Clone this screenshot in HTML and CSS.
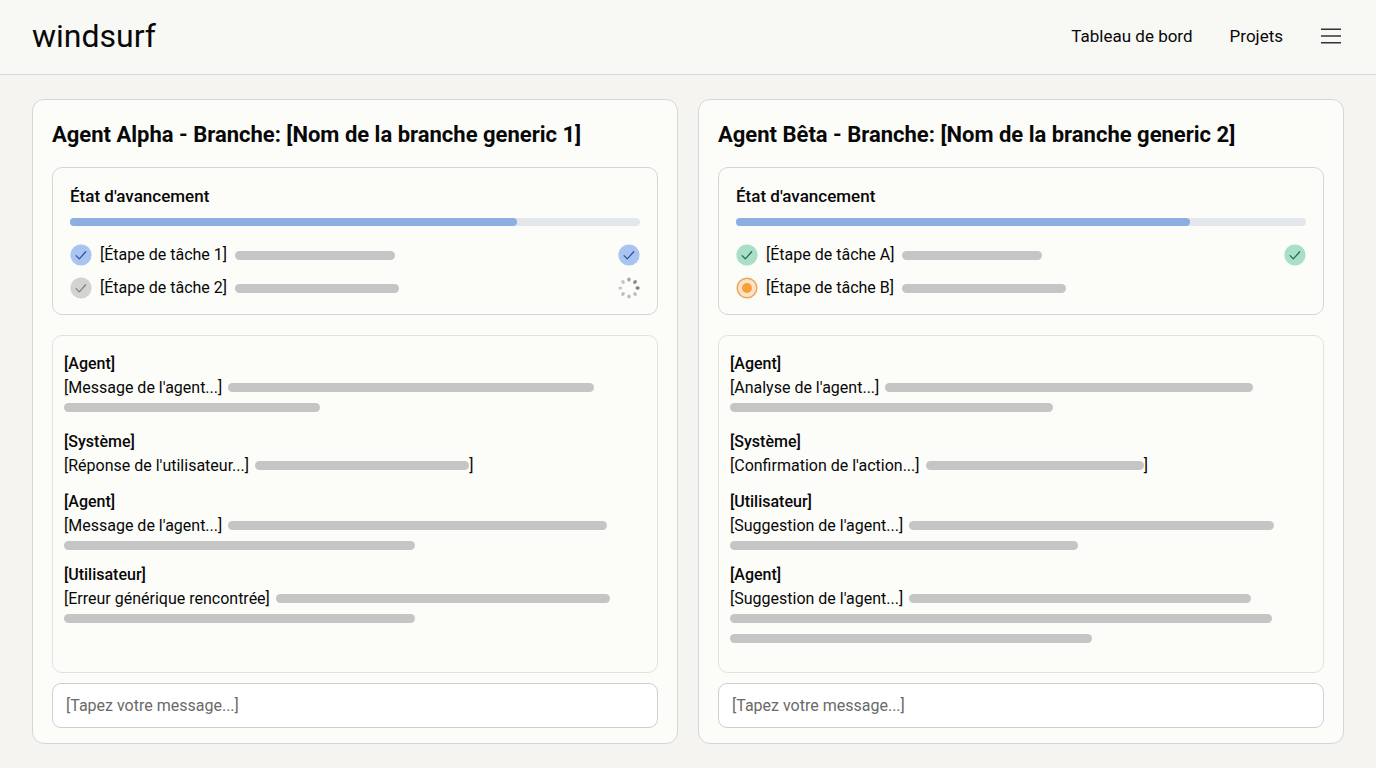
FILE: index.html
```html
<!DOCTYPE html>
<html lang="fr">
<head>
    <meta charset="UTF-8">
    <meta name="viewport" content="width=device-width, initial-scale=1.0">
    <title>windsurf</title>
    <link rel="stylesheet" href="styles.css">
</head>
<body>
    <!-- shared icons -->
    <svg class="sprite" aria-hidden="true">
        <symbol id="check" viewBox="0 0 22 22">
            <circle cx="11" cy="11" r="10.6" fill="var(--disc)"/>
            <path d="M6.1 11.6l3.2 3.3 6.4-7.1" fill="none" stroke="var(--mark)" stroke-width="1.3" stroke-linecap="round" stroke-linejoin="round"/>
        </symbol>
    </svg>

    <header class="header">
        <a class="logo" href="#">windsurf</a>
        <nav class="nav">
            <a href="#">Tableau de bord</a>
            <a href="#">Projets</a>
            <button class="menu" type="button" aria-label="Menu">
                <svg width="22" height="16" viewBox="0 0 22 16" stroke="#333" stroke-width="1.6">
                    <path d="M1 1.3h20M1 8h20M1 14.7h20"/>
                </svg>
            </button>
        </nav>
    </header>

    <main class="panels">
        <section class="panel">
            <h2>Agent Alpha - Branche: [Nom de la branche generic 1]</h2>

            <div class="status">
                <label for="progressAlpha">État d'avancement</label>
                <progress id="progressAlpha" max="100" value="78.4"></progress>
                <ul class="tasks">
                    <li>
                        <svg class="icon blue"><use href="#check"/></svg>
                        <span>[Étape de tâche 1]</span>
                        <i class="bar" style="width: 28%"></i>
                        <svg class="icon end blue"><use href="#check"/></svg>
                    </li>
                    <li>
                        <svg class="icon gray"><use href="#check"/></svg>
                        <span>[Étape de tâche 2]</span>
                        <i class="bar" style="width: 28.7%"></i>
                        <svg class="icon end" viewBox="0 0 22 22">
                            <ellipse cx="11" cy="2.6" rx="1.7" ry="2.1" fill="#a3a4a9"/>
                            <ellipse cx="17" cy="5" rx="1.7" ry="2.1" fill="#8b8c93" transform="rotate(45 17 5)"/>
                            <ellipse cx="19.6" cy="11" rx="2.1" ry="1.7" fill="#7d7e86"/>
                            <ellipse cx="17" cy="17" rx="1.6" ry="2" fill="#bcbdc0" transform="rotate(-45 17 17)"/>
                            <ellipse cx="11" cy="19.4" rx="1.6" ry="2" fill="#b9babd"/>
                            <ellipse cx="5" cy="17" rx="1.6" ry="2" fill="#bebfc2" transform="rotate(45 5 17)"/>
                            <ellipse cx="2.4" cy="11" rx="2" ry="1.6" fill="#c6c7ca"/>
                            <ellipse cx="5" cy="5" rx="1.6" ry="2" fill="#c3c4c7" transform="rotate(-45 5 5)"/>
                        </svg>
                    </li>
                </ul>
            </div>

            <div class="chat">
                <div class="message">
                    <h3>[Agent]</h3>
                    <p>[Message de l'agent...] <i class="bar" style="width: 62.9%"></i></p>
                    <i class="bar" style="width: 44%"></i>
                </div>
                <div class="message">
                    <h3>[Système]</h3>
                    <p>[Réponse de l'utilisateur...] <i class="bar" style="width: 36.8%"></i><span class="close">]</span></p>
                </div>
                <div class="message">
                    <h3>[Agent]</h3>
                    <p>[Message de l'agent...] <i class="bar" style="width: 65.1%"></i></p>
                    <i class="bar" style="width: 60.3%"></i>
                </div>
                <div class="message">
                    <h3>[Utilisateur]</h3>
                    <p>[Erreur générique rencontrée] <i class="bar" style="width: 57.4%"></i></p>
                    <i class="bar" style="width: 60.3%"></i>
                </div>
            </div>

            <input type="text" aria-label="Message à Agent Alpha" placeholder="[Tapez votre message...]">
        </section>

        <section class="panel">
            <h2>Agent Bêta - Branche: [Nom de la branche generic 2]</h2>

            <div class="status">
                <label for="progressBeta">État d'avancement</label>
                <progress id="progressBeta" max="100" value="79.7"></progress>
                <ul class="tasks">
                    <li>
                        <svg class="icon green"><use href="#check"/></svg>
                        <span>[Étape de tâche A]</span>
                        <i class="bar" style="width: 24.5%"></i>
                        <svg class="icon end green"><use href="#check"/></svg>
                    </li>
                    <li>
                        <svg class="icon" viewBox="0 0 22 22">
                            <circle cx="11" cy="11" r="9.8" fill="#fbe3c8" stroke="#eda755" stroke-width="1.5"/>
                            <circle cx="11" cy="11" r="5" fill="#f6a03c"/>
                        </svg>
                        <span>[Étape de tâche B]</span>
                        <i class="bar" style="width: 28.7%"></i>
                    </li>
                </ul>
            </div>

            <div class="chat">
                <div class="message">
                    <h3>[Agent]</h3>
                    <p>[Analyse de l'agent...] <i class="bar" style="width: 63.1%"></i></p>
                    <i class="bar" style="width: 55.5%"></i>
                </div>
                <div class="message">
                    <h3>[Système]</h3>
                    <p>[Confirmation de l'action...] <i class="bar" style="width: 37.5%"></i><span class="close">]</span></p>
                </div>
                <div class="message">
                    <h3>[Utilisateur]</h3>
                    <p>[Suggestion de l'agent...] <i class="bar" style="width: 62.7%"></i></p>
                    <i class="bar" style="width: 59.8%"></i>
                </div>
                <div class="message">
                    <h3>[Agent]</h3>
                    <p>[Suggestion de l'agent...] <i class="bar" style="width: 58.8%"></i></p>
                    <i class="bar" style="width: 93.1%"></i>
                    <i class="bar" style="width: 62.2%"></i>
                </div>
            </div>

            <input type="text" aria-label="Message à Agent Bêta" placeholder="[Tapez votre message...]">
        </section>
    </main>
</body>
</html>
```

FILE: styles.css
```css
* {
    box-sizing: border-box;
}
body {
    margin: 0;
    min-height: 100vh;
    display: flex;
    flex-direction: column;
    font-family: Roboto, Arial, sans-serif;
    font-size: 16px;
    line-height: 24px;
    color: #080808;
    background: #f5f4f1;
}
h2, h3, p, ul {
    margin: 0;
    padding: 0;
}
a {
    color: inherit;
    text-decoration: none;
}
.sprite {
    display: none;
}

/* header */
.header {
    display: flex;
    justify-content: space-between;
    align-items: center;
    height: 75px;
    padding: 0 32px 2px;
    background: #f8f8f5;
    border-bottom: 1px solid #d6d9d9;
}
.logo {
    font-size: 32px;
    line-height: 40px;
}
.nav {
    display: flex;
    align-items: center;
    gap: 37px;
    font-size: 17px;
}
.menu {
    display: flex;
    padding: 0;
    margin-right: 2px;
    border: 0;
    background: none;
    cursor: pointer;
}

/* agent panels */
.panels {
    flex: 1;
    display: grid;
    grid-template-columns: 1fr 1fr;
    gap: 20px;
    padding: 24px 32px;
}
.panel {
    display: flex;
    flex-direction: column;
    padding: 20px 19px 15px;
    background: #fcfcf9;
    border: 1px solid #d4d7d7;
    border-radius: 12px;
}
h2 {
    margin-bottom: 17px;
    font-size: 22px;
    line-height: 30px;
    font-weight: 700;
}
.bar {
    display: block;
    flex-shrink: 0;
    height: 9px;
    border-radius: 5px;
    background: #c5c5c5;
}

/* progress card */
.status {
    padding: 16px 17px 15px;
    border: 1px solid #d4d7d7;
    border-radius: 10px;
}
label {
    display: block;
    font-size: 17px;
    font-weight: 500;
}
progress {
    display: block;
    width: 100%;
    height: 8px;
    margin: 10px 0 18px;
    border: 0;
    appearance: none;
}
progress::-webkit-progress-bar {
    background: #e3e6ea;
    border-radius: 4px;
}
progress::-webkit-progress-value {
    background: #8eade2;
    border-radius: 4px;
}
.tasks {
    display: flex;
    flex-direction: column;
    gap: 11px;
    list-style: none;
}
.tasks li {
    display: flex;
    align-items: center;
    gap: 8px;
    height: 22px;
}
.icon {
    width: 22px;
    height: 22px;
    flex-shrink: 0;
}
.end {
    margin-left: auto;
}
.blue {
    --disc: #a9c4f0;
    --mark: #2d5797;
}
.gray {
    --disc: #d3d3d3;
    --mark: #808080;
}
.green {
    --disc: #a9dfc9;
    --mark: #1e6e4d;
}

/* conversation */
.chat {
    flex: 1;
    margin: 20px 0 10px;
    padding: 16px 11px 27px;
    border: 1px solid #e0e2e1;
    border-radius: 10px;
}
.message {
    margin-bottom: 13px;
}
.message:first-child {
    margin-bottom: 18px;
}
.message:last-child {
    margin-bottom: 0;
}
h3 {
    font-size: 16px;
    font-weight: 500;
}
.message p {
    display: flex;
    align-items: center;
    gap: 6px;
    line-height: 23px;
}
.message > .bar {
    margin-top: 4px;
}
.message > .bar + .bar {
    margin-top: 11px;
}
.message .close {
    margin-left: -6px;
}
input {
    width: 100%;
    height: 45px;
    padding: 0 13px;
    font: inherit;
    color: inherit;
    background: #fff;
    border: 1px solid #cdd0d1;
    border-radius: 9px;
}
input::placeholder {
    color: #6a6a6a;
    opacity: 1;
}
```
